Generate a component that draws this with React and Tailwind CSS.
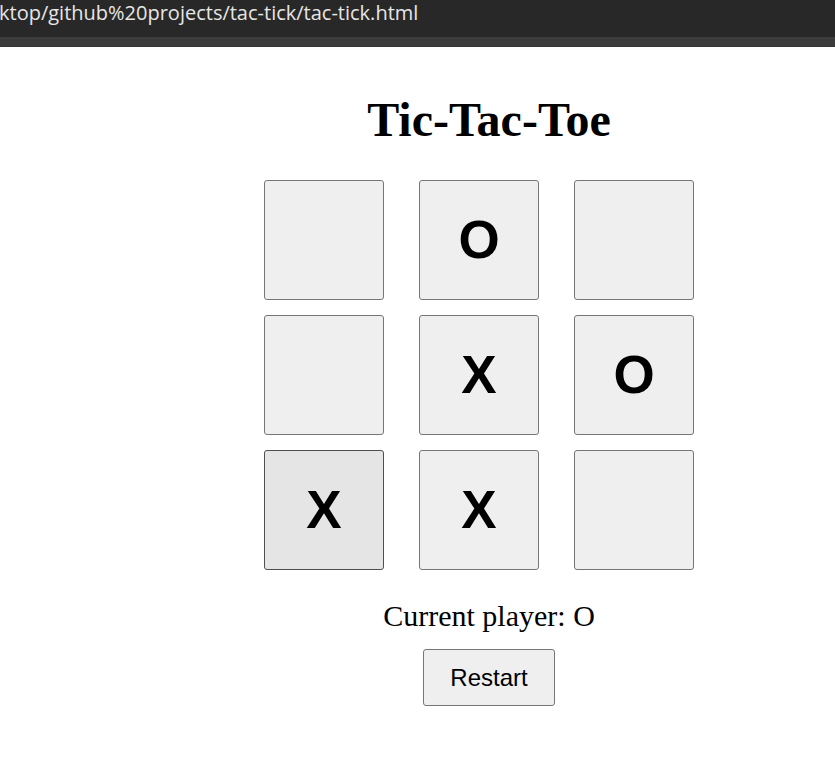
import React, { useState } from "react";

const start = ["", "O", "", "", "X", "O", "X", "X", ""];

const Cell = ({ value, hovered, onClick }) => (
  <button
    onClick={onClick}
    className={`w-[120px] h-[120px] rounded-[3px] border flex items-center justify-center font-bold text-[53px] text-black ${
      hovered ? "bg-[#e5e5e5] border-[#4f4f4f]" : "bg-[#efefef] border-[#767676]"
    }`}
    style={{ fontFamily: '"Liberation Sans", Arial, sans-serif' }}
  >
    {value}
  </button>
);

export default function App() {
  const [board, setBoard] = useState(start);
  const [player, setPlayer] = useState("O");

  const play = (i) => {
    if (board[i]) return;
    const next = [...board];
    next[i] = player;
    setBoard(next);
    setPlayer(player === "X" ? "O" : "X");
  };

  const restart = () => {
    setBoard(Array(9).fill(""));
    setPlayer("X");
  };

  return (
    <div className="w-[835px] min-h-[781px] bg-white">
      <div className="h-[37px] bg-[#282828] overflow-hidden whitespace-nowrap">
        <p
          className="-ml-[1px] text-[20px] leading-[26px] text-[#e6e6e6]"
          style={{ fontFamily: '"Open Sans", "Noto Sans", sans-serif' }}
        >
          ktop/github%20projects/tac-tick/tac-tick.html
        </p>
      </div>
      <div className="h-[10px] bg-[#3c3c3c] border-b border-[#363636]" />

      <div className="pl-[143px] flex flex-col items-center" style={{ fontFamily: '"Liberation Serif", "Times New Roman", serif' }}>
        <h1 className="mt-[46px] text-[48px] leading-[53px] font-bold text-black">Tic-Tac-Toe</h1>

        <div className="w-[450px] mt-[34px]">
          <div className="grid grid-cols-[repeat(3,120px)] gap-x-[35px] gap-y-[15px]">
            {board.map((v, i) => (
              <Cell key={i} value={v} hovered={i === 6} onClick={() => play(i)} />
            ))}
          </div>
        </div>

        <p className="mt-[29px] text-[30px] leading-[33px] text-black">Current player: {player}</p>

        <button
          onClick={restart}
          className="mt-[17px] w-[132px] h-[57px] rounded-[3px] border border-[#767676] bg-[#efefef] text-[24px] text-black flex items-center justify-center"
          style={{ fontFamily: '"Liberation Sans", Arial, sans-serif' }}
        >
          Restart
        </button>
      </div>
    </div>
  );
}
